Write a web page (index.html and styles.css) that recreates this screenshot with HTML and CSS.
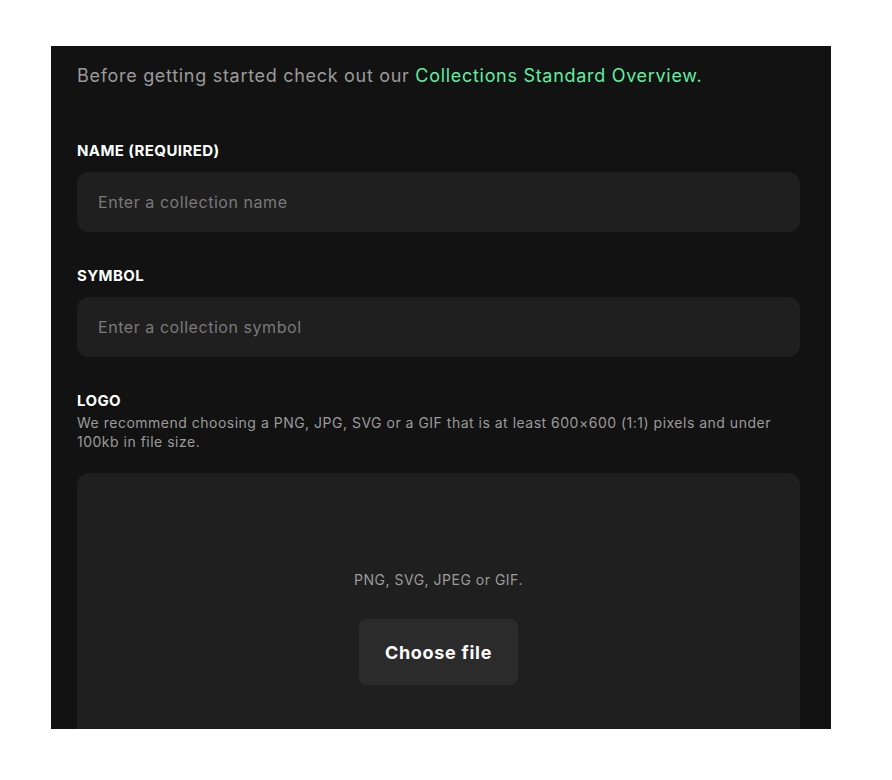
FILE: index.html
```html
<!DOCTYPE html>
<html lang="en">
<head>
  <meta charset="UTF-8">
  <meta name="viewport" content="width=device-width, initial-scale=1.0">
  <title>Create Collection</title>
  <link rel="stylesheet" href="styles.css">
</head>
<body>
  <main class="panel">
    <p class="intro">Before getting started check out our <a href="#">Collections Standard Overview.</a></p>

    <div class="field">
      <label for="name">NAME (REQUIRED)</label>
      <input id="name" type="text" placeholder="Enter a collection name">
    </div>

    <div class="field">
      <label for="symbol">SYMBOL</label>
      <input id="symbol" type="text" placeholder="Enter a collection symbol">
    </div>

    <div class="field">
      <label>LOGO</label>
      <p class="hint">We recommend choosing a PNG, JPG, SVG or a GIF that is at least 600×600 (1:1) pixels and under 100kb in file size.</p>
      <div class="dropzone">
        <p class="types">PNG, SVG, JPEG or GIF.</p>
        <button type="button">Choose file</button>
      </div>
    </div>
  </main>
</body>
</html>
```

FILE: styles.css
```css
body {
  margin: 0;
  background-color: #fff;
  font-family: Inter, "Noto Sans", sans-serif;
}

.panel {
  box-sizing: border-box;
  width: 780px;
  height: 683px;
  margin: 46px 0 0 51px;
  padding: 16px 31px 0 26px;
  background-color: #121212;
  overflow: hidden;
}

.intro {
  margin: 0;
  font-size: 18px;
  line-height: 28px;
  letter-spacing: 0.7px;
  color: #9b9b9b;
}

.intro a {
  color: #5fefa0;
  text-decoration: none;
}

.field {
  margin-top: 34px;
}

.field:first-of-type {
  margin-top: 51px;
}

label {
  display: block;
  font-size: 15px;
  line-height: 20px;
  font-weight: 700;
  letter-spacing: 0.4px;
  color: #fff;
}

input {
  box-sizing: border-box;
  display: block;
  width: 100%;
  height: 60px;
  margin-top: 11px;
  padding: 0 21px;
  border: none;
  border-radius: 12px;
  background-color: #1f1f1f;
  font-family: inherit;
  font-size: 16px;
  letter-spacing: 0.55px;
  color: #fff;
  outline: none;
}

input::placeholder {
  color: #7a7a7a;
}

.hint {
  margin: 2px 0 0;
  font-size: 14px;
  line-height: 19px;
  letter-spacing: 0.5px;
  color: #9b9b9b;
}

.dropzone {
  display: flex;
  flex-direction: column;
  align-items: center;
  height: 300px;
  margin-top: 22px;
  padding-top: 97px;
  border-radius: 12px;
  background-color: #1f1f1f;
}

.types {
  margin: 0;
  font-size: 14px;
  line-height: 20px;
  letter-spacing: 0.5px;
  color: #9b9b9b;
}

button {
  margin-top: 29px;
  height: 66px;
  padding: 0 26px;
  border: none;
  border-radius: 8px;
  background-color: #2b2b2b;
  font-family: inherit;
  font-size: 18px;
  font-weight: 700;
  letter-spacing: 0.7px;
  color: #fff;
  cursor: pointer;
}
```
